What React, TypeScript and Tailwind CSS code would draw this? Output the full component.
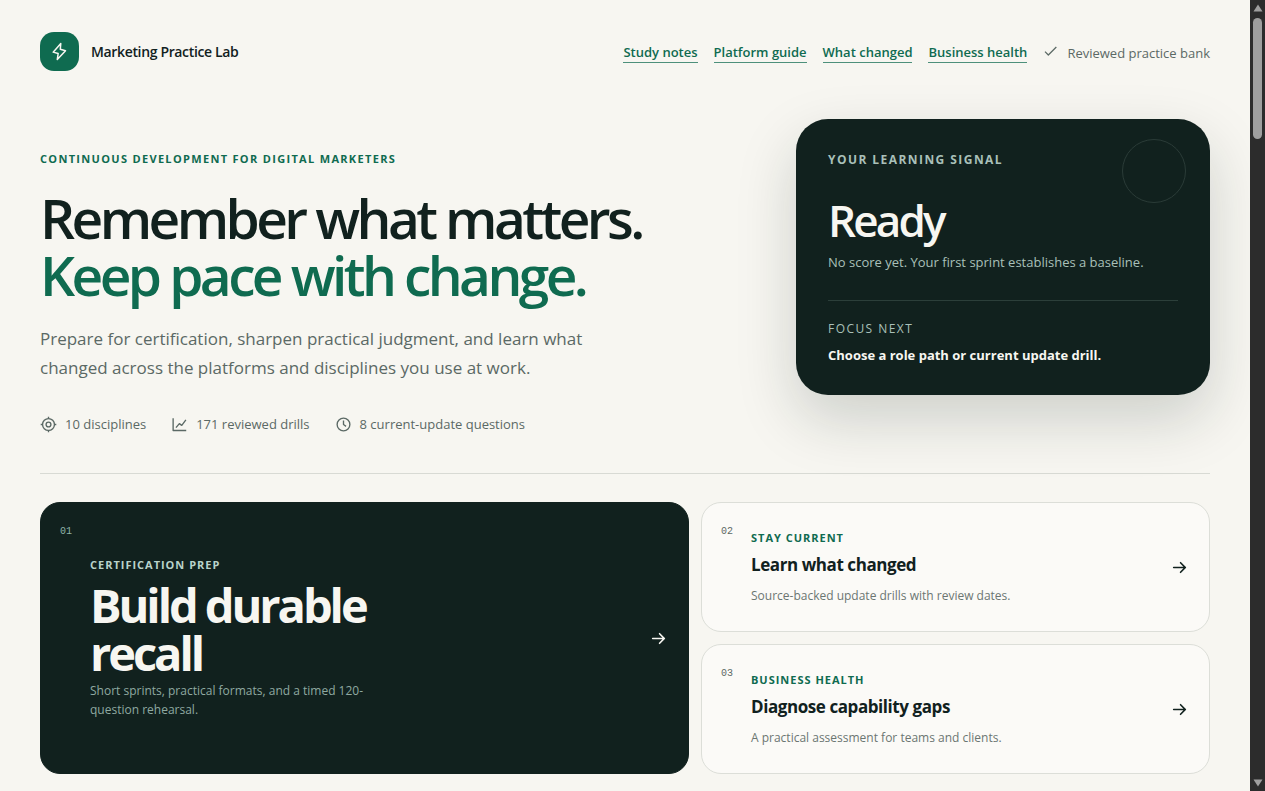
import * as React from 'react'
import { PiArrowRightBold } from 'react-icons/pi'
import clsx from 'clsx'

interface Action {
  number: string
  label: string
  title: string
  text: string
  featured?: boolean
}

interface IconProps {
  children: React.ReactNode
  className?: string
}

function Icon({ children, className }: IconProps) {
  return (
    <svg
      viewBox="0 0 24 24"
      fill="none"
      stroke="currentColor"
      strokeWidth={1.9}
      strokeLinejoin="round"
      className={clsx('shrink-0', className)}
      aria-hidden="true"
    >
      {children}
    </svg>
  )
}

const navLinks = ['Study notes', 'Platform guide', 'What changed', 'Business health']

const stats = [
  {
    text: '10 disciplines',
    icon: (
      <>
        <circle cx="12" cy="12" r="8.4" />
        <circle cx="12" cy="12" r="3.4" />
        <path d="M12 1v3M12 20v3M1 12h3M20 12h3" />
      </>
    ),
  },
  {
    text: '171 reviewed drills',
    icon: (
      <>
        <path d="M3 3v17.5h18.5" />
        <path d="M7 16.5 11.8 10.8l3.4 2.4L21 5.5" />
      </>
    ),
  },
  {
    text: '8 current-update questions',
    icon: (
      <>
        <circle cx="12" cy="12" r="9" />
        <path d="M12 6.5V12l3.6 2.6" />
      </>
    ),
  },
]

const actions: Action[] = [
  {
    number: '01',
    label: 'Certification prep',
    title: 'Build durable recall',
    text: 'Short sprints, practical formats, and a timed 120-question rehearsal.',
    featured: true,
  },
  {
    number: '02',
    label: 'Stay current',
    title: 'Learn what changed',
    text: 'Source-backed update drills with review dates.',
  },
  {
    number: '03',
    label: 'Business health',
    title: 'Diagnose capability gaps',
    text: 'A practical assessment for teams and clients.',
  },
]

function Header() {
  return (
    <header className="flex items-center justify-between pt-8">
      <a href="#" className="flex items-center gap-3 text-sm font-semibold tracking-tight">
        <span className="grid size-[39px] place-items-center rounded-[14px] bg-[#0f6b50] text-[#f7f6f1]">
          <Icon className="size-[19px]">
            <path d="M13.6 2 4 12.8l6.3 1.6-1.1 7.8 10.4-11.2-6.6-1.8Z" />
          </Icon>
        </span>
        Marketing Practice Lab
      </a>
      <div className="flex items-center pt-0.5 text-[13px] leading-5">
        <nav className="flex gap-4">
          {navLinks.map((link) => (
            <a key={link} href="#" className="border-b border-[#4d907b] font-semibold text-[#0f6b50]">
              {link}
            </a>
          ))}
        </nav>
        <span className="ml-4 flex items-center gap-2 text-[#5b6965]">
          <Icon className="mb-1 size-4">
            <path d="m3 13 5 5L20 6" />
          </Icon>
          Reviewed practice bank
        </span>
      </div>
    </header>
  )
}

function SignalCard() {
  return (
    <aside className="relative rounded-[32px] bg-[#11211e] px-8 pt-[33px] pb-7 text-[#f7f6f1] shadow-[0_24px_60px_rgba(17,33,30,0.18)]">
      <span className="absolute top-5 right-6 size-16 rounded-full border border-[#2a3b37]" />
      <p className="text-xs leading-4 font-bold tracking-[0.12em] text-[#a9c0b9] uppercase">Your learning signal</p>
      <p className="mt-7 text-[44px] leading-[48px] font-semibold tracking-[-0.065em]">Ready</p>
      <p className="mt-1.5 text-[13px] leading-6 text-[#a9c0b9]">No score yet. Your first sprint establishes a baseline.</p>
      <div className="mt-[26px] border-t border-[#2c3f3a] pt-5">
        <p className="text-xs leading-4 tracking-[0.12em] text-[#a9c0b9] uppercase">Focus next</p>
        <p className="mt-1.5 text-[13px] leading-6 font-bold">Choose a role path or current update drill.</p>
      </div>
    </aside>
  )
}

function Hero() {
  return (
    <section className="mt-12 grid grid-cols-[1fr_414px] items-start gap-12 border-b border-[#d8dad4] pb-[39px]">
      <div className="pt-[31px]">
        <p className="text-[11px] leading-[18px] font-bold tracking-[0.12em] text-[#0f6b50] uppercase">
          Continuous development for digital marketers
        </p>
        <h1 className="mt-[21px] text-[55px] leading-[57px] font-semibold tracking-[-0.065em]">
          Remember what matters.
          <span className="block text-[#0f6b50]">Keep pace with change.</span>
        </h1>
        <p className="mt-[21px] max-w-[560px] text-[17px] leading-[29px] text-[#5b6965]">
          Prepare for certification, sharpen practical judgment, and learn what changed across the platforms and
          disciplines you use at work.
        </p>
        <ul className="mt-8 flex gap-[25px] text-[13px] leading-5 text-[#5b6965]">
          {stats.map(({ icon, text }) => (
            <li key={text} className="flex items-center gap-2">
              <Icon className="size-[17px]">{icon}</Icon>
              {text}
            </li>
          ))}
        </ul>
      </div>
      <SignalCard />
    </section>
  )
}

function ActionCard({ action }: { action: Action }) {
  const { number, label, title, text, featured } = action

  return (
    <a
      href="#"
      className={clsx(
        'flex items-center rounded-[20px] border px-[19px]',
        featured ? 'row-span-2 border-[#11211e] bg-[#11211e] text-[#f7f6f1]' : 'border-[#dcded8] bg-[#fbfaf7]',
      )}
    >
      <span
        className={clsx(
          'w-[30px] self-start pt-[21px] font-["Liberation_Mono",monospace] text-[10px] leading-4',
          featured ? 'text-[#8fb3a7]' : 'text-[#5b6965]',
        )}
      >
        {number}
      </span>
      <span className="flex-1">
        <span
          className={clsx(
            'block text-[11px] leading-4 font-bold tracking-[0.09em] uppercase',
            featured ? 'text-[#b9d3ca]' : 'text-[#0f6b50]',
          )}
        >
          {label}
        </span>
        <strong
          className={clsx(
            'block font-bold',
            featured
              ? 'mt-2 max-w-[290px] text-[47px] leading-[48px] tracking-[-0.065em]'
              : 'mt-1.5 text-[17px] leading-[26px] tracking-tight',
          )}
        >
          {title}
        </strong>
        <span
          className={clsx(
            'block text-xs leading-[19px]',
            featured ? 'mt-1 max-w-[280px] text-[#8fa9a1]' : 'mt-2 text-[#6b7672]',
          )}
        >
          {text}
        </span>
      </span>
      <PiArrowRightBold className="mr-0.5 size-[17px]" />
    </a>
  )
}

function Scrollbar() {
  return (
    <div className="flex w-[15px] shrink-0 flex-col items-center bg-[#2c2c2c] py-1" aria-hidden="true">
      <svg viewBox="0 0 10 8" className="h-2 w-2.5 fill-[#9f9f9f]">
        <path d="M5 0.5 9.5 7.5H0.5Z" />
      </svg>
      <span className="mt-1.5 h-[121px] w-[9px] rounded-full bg-[#9f9f9f]" />
      <svg viewBox="0 0 10 8" className="mt-auto h-2 w-2.5 fill-[#9f9f9f]">
        <path d="M5 7.5 9.5 0.5H0.5Z" />
      </svg>
    </div>
  )
}

export default function App() {
  return (
    <div className="flex h-screen bg-[#f7f6f1] font-['Open_Sans','Noto_Sans',sans-serif] text-[#11211e]">
      <main className="min-w-0 flex-1 overflow-hidden px-10">
        <Header />
        <Hero />
        <section className="mt-7 grid grid-cols-[1.275fr_1fr] grid-rows-[130px_130px] gap-3">
          {actions.map((action) => (
            <ActionCard key={action.number} action={action} />
          ))}
        </section>
      </main>
      <Scrollbar />
    </div>
  )
}
